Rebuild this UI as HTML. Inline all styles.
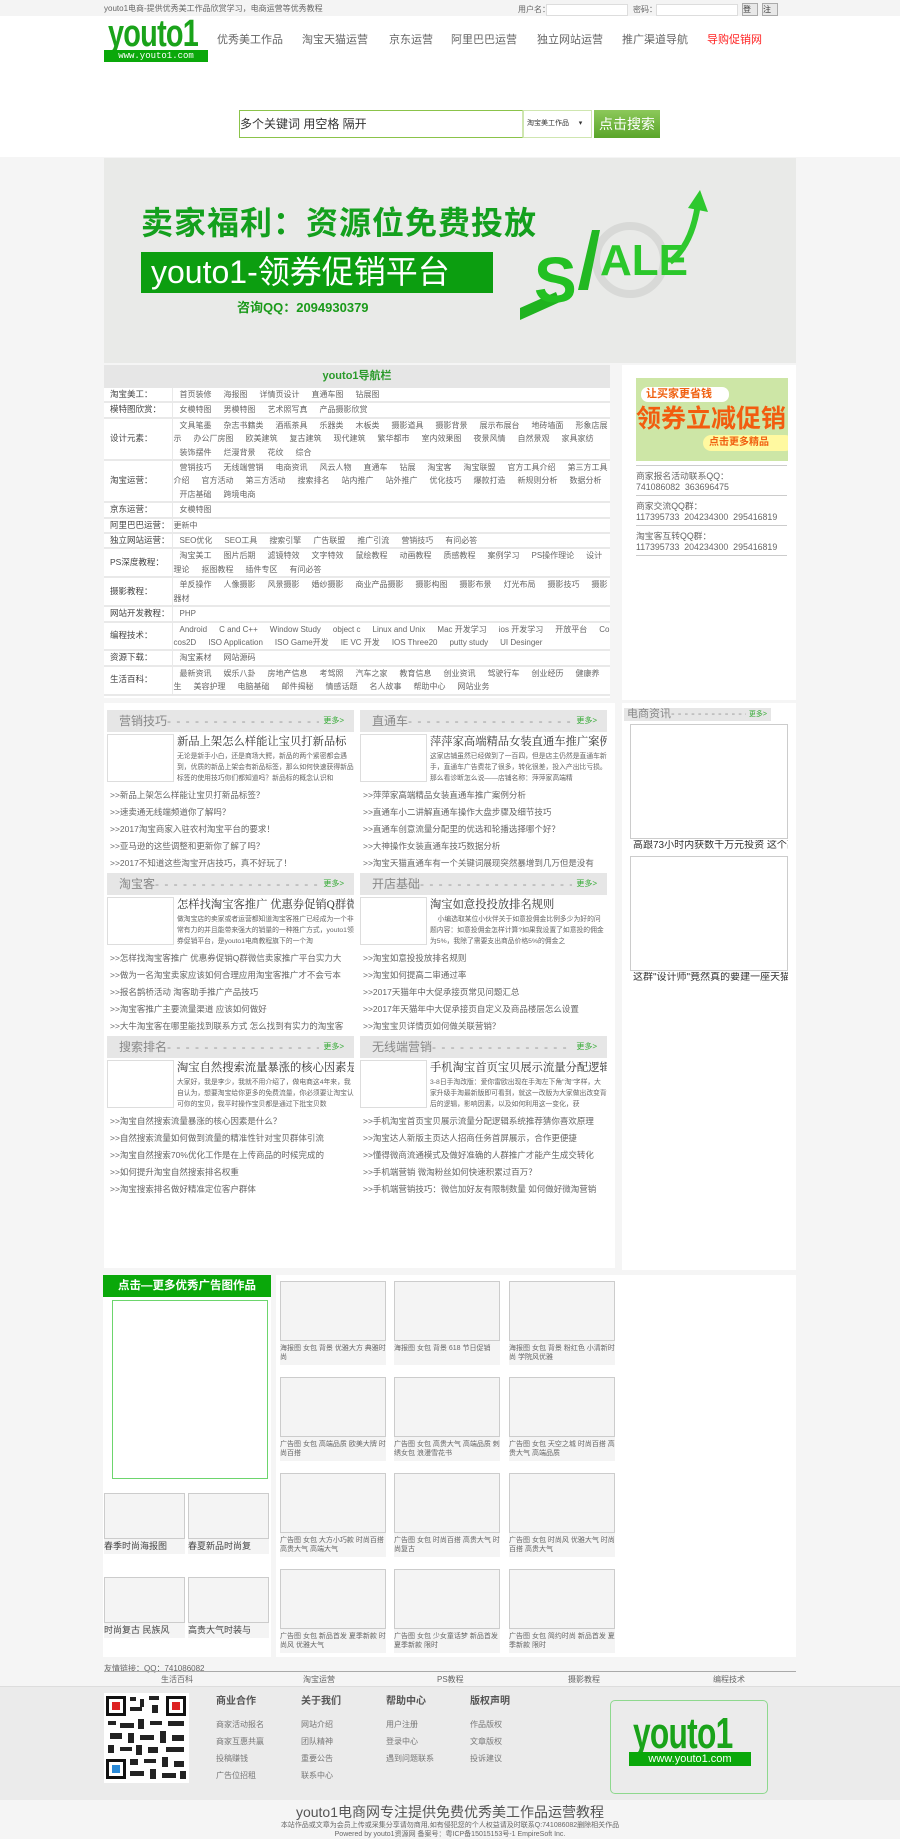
<!DOCTYPE html>
<html><head><meta charset="utf-8">
<style>
*{margin:0;padding:0;box-sizing:border-box}
body{width:900px;height:1839px;background:#f5f5f5;font-family:"Liberation Sans","Noto Sans CJK SC",sans-serif;font-size:11px;color:#555;position:relative;overflow:hidden}
.abs{position:absolute}
.top{left:0;top:0;width:900px;height:16px;background:#f4f4f4}
.hdr{left:0;top:16px;width:900px;height:141px;background:#fff}
.nav span{position:absolute;top:31px;font-size:11px;color:#666;white-space:nowrap}
.inp{border:1px solid #ddd;height:12px;background:#fff}
.banner{left:104px;top:158px;width:692px;height:205px;background:#e9eae8}
table.nv{border-collapse:collapse;width:506px;font-size:8px;color:#666;table-layout:fixed}
table.nv td{border-bottom:2px solid #e9e9e9;line-height:13.4px;vertical-align:middle;padding:0}
table.nv td.l{width:68px;border-right:1px solid #e9e9e9;padding-left:6px;color:#444;white-space:nowrap;font-size:8.5px}
table.nv td.r{padding-left:1px;word-break:break-all}
table.nv td.r i{font-style:normal;margin:0 6px}
.sec{position:absolute;width:247px;height:160px}
.sh{height:22px;background:#e6e6e6;font-size:12px;color:#888;line-height:22px;padding:0 10px 0 12px;white-space:nowrap;overflow:hidden;display:flex}
.sh b{font-weight:normal;color:#999;flex:1;overflow:hidden;letter-spacing:1px}
.sh em{font-style:normal;color:#3a3;font-size:8px;margin-left:4px;flex:none}
.im{position:absolute;left:0;top:24px;width:67px;height:48px;border:1px solid #ddd;background:#fff}
.tt{position:absolute;left:70px;top:24px;width:177px;font-family:"Liberation Serif","Noto Serif CJK SC",serif;font-size:11.3px;color:#333;white-space:nowrap;overflow:hidden;line-height:16px}
.sm{position:absolute;left:70px;top:41px;width:177px;height:32px;overflow:hidden;font-size:6.8px;line-height:11px;color:#666}
.ls{position:absolute;left:3px;top:77px;font-size:8.5px;line-height:17px;color:#666;white-space:nowrap;width:244px;overflow:hidden}
.cell{position:absolute;width:106px;height:84px;background:#f4f4f4}
.cell div{height:60px;border:1px solid #ccc;background:#f4f4f4}
.cell p{font-size:7px;line-height:9px;color:#666;padding-top:3px}
.fc{position:absolute;top:1693px;font-size:8px;color:#777;line-height:17px}
.fc b{display:block;font-size:10px;color:#555;margin-bottom:6px}
.logo{font-weight:bold;color:#1aa31a;letter-spacing:-1px;transform-origin:left top;white-space:nowrap}
</style></head><body>
<div class="abs top"></div>
<div class="abs" style="left:104px;top:3px;font-size:8px;color:#666">youto1电商-提供优秀美工作品欣赏学习，电商运营等优秀教程</div>
<div class="abs" style="left:518px;top:4px;font-size:8px;color:#666">用户名：</div>
<div class="abs inp" style="left:546px;top:4px;width:82px"></div>
<div class="abs" style="left:633px;top:4px;font-size:8px;color:#666">密码：</div>
<div class="abs inp" style="left:656px;top:4px;width:82px"></div>
<div class="abs" style="left:742px;top:3px;width:16px;height:13px;border:1px solid #aaa;background:#e8e8e8;font-size:8px;color:#333">登陆</div>
<div class="abs" style="left:762px;top:3px;width:16px;height:13px;border:1px solid #aaa;background:#e8e8e8;font-size:8px;color:#333">注册</div>
<div class="abs hdr"></div>
<div class="abs logo" style="left:108px;top:16px;font-size:38px;line-height:36px;transform:scaleX(0.76)">youto1</div>
<div class="abs" style="left:104px;top:50px;width:104px;height:12px;background:#0aa80a;color:#fff;font-family:'Liberation Mono',monospace;font-size:9px;text-align:center;line-height:12px">www.youto1.com</div>
<div class="nav">
<span style="left:217px">优秀美工作品</span><span style="left:302px">淘宝天猫运营</span><span style="left:389px">京东运营</span><span style="left:451px">阿里巴巴运营</span><span style="left:537px">独立网站运营</span><span style="left:622px">推广渠道导航</span><span style="left:707px;color:#f22">导购促销网</span>
</div>
<div class="abs" style="left:239px;top:110px;width:284px;height:28px;border:1px solid #8bc34a;border-right:1px solid #cfe6b0;background:#fff;font-size:12px;color:#333;line-height:26px">多个关键词 用空格 隔开</div>
<div class="abs" style="left:523px;top:110px;width:69px;height:28px;border:1px solid #cfe6b0;background:#fff;font-size:7px;color:#333;line-height:26px;padding-left:3px">淘宝美工作品 &nbsp;&nbsp;&nbsp;&nbsp;▾</div>
<div class="abs" style="left:594px;top:110px;width:66px;height:28px;background:linear-gradient(#8cc85a,#5aa52a);color:#fff;font-size:14px;line-height:28px;text-align:center">点击搜索</div>

<div class="abs banner"></div>
<div class="abs" style="left:141px;top:205px;font-size:32px;font-weight:bold;color:#14a01e;letter-spacing:1px;white-space:nowrap;line-height:36px">卖家福利：资源位免费投放</div>
<div class="abs" style="left:141px;top:252px;width:352px;height:41px;background:#0c9e10;color:#fff;font-size:32px;line-height:41px;padding-left:10px;white-space:nowrap">youto1-领券促销平台</div>
<div class="abs" style="left:237px;top:297px;font-size:13px;font-weight:bold;color:#1a9a1a">咨询QQ：2094930379</div>
<svg class="abs" style="left:520px;top:190px" width="190" height="130" viewBox="0 0 190 130">
<circle cx="110" cy="70" r="34" fill="none" stroke="#d8d9d7" stroke-width="8"/>
<path d="M0 130 L40 112 L36 102 L0 118Z" fill="#1fb31f"/>
<text x="14" y="112" font-family="Liberation Sans" font-weight="bold" font-size="64" fill="#22c022">S</text>
<path d="M58 100 L72 40 L80 40 L68 100Z" fill="#22b822"/>
<text x="80" y="85" font-family="Liberation Sans" font-weight="bold" font-size="44" fill="#2bc72b">ALE</text>
<path d="M150 72 Q172 55 178 14" stroke="#2ec82e" stroke-width="6" fill="none"/>
<path d="M168 18 L180 0 L188 22Z" fill="#2ec82e"/>
</svg>

<!-- nav table -->
<div class="abs" style="left:104px;top:365px;width:506px;height:333px;background:#fff;overflow:hidden">
<div style="height:23px;background:#e6e6e6;text-align:center;font-size:11px;font-weight:bold;color:#2a9a2a;line-height:23px">youto1导航栏</div>
<table class="nv">
<tr><td class="l">淘宝美工：</td><td class="r"><i>首页装修</i><i>海报图</i><i>详情页设计</i><i>直通车图</i><i>钻展图</i></td></tr>
<tr><td class="l">模特图欣赏：</td><td class="r"><i>女模特图</i><i>男模特图</i><i>艺术照写真</i><i>产品摄影欣赏</i></td></tr>
<tr><td class="l">设计元素：</td><td class="r"><i>文具笔墨</i><i>杂志书籍类</i><i>酒瓶茶具</i><i>乐器类</i><i>木板类</i><i>摄影道具</i><i>摄影背景</i><i>展示布展台</i><i>地砖墙面</i><i>形象店展示</i><i>办公厂房图</i><i>欧美建筑</i><i>复古建筑</i><i>现代建筑</i><i>繁华都市</i><i>室内效果图</i><i>夜景风情</i><i>自然景观</i><i>家具家纺</i><i>装饰摆件</i><i>烂漫背景</i><i>花纹</i><i>综合</i></td></tr>
<tr><td class="l">淘宝运营：</td><td class="r"><i>营销技巧</i><i>无线端营销</i><i>电商资讯</i><i>风云人物</i><i>直通车</i><i>钻展</i><i>淘宝客</i><i>淘宝联盟</i><i>官方工具介绍</i><i>第三方工具介绍</i><i>官方活动</i><i>第三方活动</i><i>搜索排名</i><i>站内推广</i><i>站外推广</i><i>优化技巧</i><i>爆款打造</i><i>新规则分析</i><i>数据分析</i><i>开店基础</i><i>跨境电商</i></td></tr>
<tr><td class="l">京东运营：</td><td class="r"><i>女模特图</i></td></tr>
<tr><td class="l">阿里巴巴运营：</td><td class="r">更新中</td></tr>
<tr><td class="l">独立网站运营：</td><td class="r"><i>SEO优化</i><i>SEO工具</i><i>搜索引擎</i><i>广告联盟</i><i>推广引流</i><i>营销技巧</i><i>有问必答</i></td></tr>
<tr><td class="l">PS深度教程：</td><td class="r"><i>淘宝美工</i><i>图片后期</i><i>滤镜特效</i><i>文字特效</i><i>鼠绘教程</i><i>动画教程</i><i>质感教程</i><i>案例学习</i><i>PS操作理论</i><i>设计理论</i><i>抠图教程</i><i>插件专区</i><i>有问必答</i></td></tr>
<tr><td class="l">摄影教程：</td><td class="r"><i>单反操作</i><i>人像摄影</i><i>风景摄影</i><i>婚纱摄影</i><i>商业产品摄影</i><i>摄影构图</i><i>摄影布景</i><i>灯光布局</i><i>摄影技巧</i><i>摄影器材</i></td></tr>
<tr><td class="l">网站开发教程：</td><td class="r"><i>PHP</i></td></tr>
<tr><td class="l">编程技术：</td><td class="r"><i>Android</i><i>C and C++</i><i>Window Study</i><i>object c</i><i>Linux and Unix</i><i>Mac 开发学习</i><i>ios 开发学习</i><i>开放平台</i><i>Cocos2D</i><i>ISO Application</i><i>ISO Game开发</i><i>IE VC 开发</i><i>IOS Three20</i><i>putty study</i><i>UI Desinger</i></td></tr>
<tr><td class="l">资源下载：</td><td class="r"><i>淘宝素材</i><i>网站源码</i></td></tr>
<tr><td class="l">生活百科：</td><td class="r"><i>最新资讯</i><i>娱乐八卦</i><i>房地产信息</i><i>考驾照</i><i>汽车之家</i><i>教育信息</i><i>创业资讯</i><i>驾驶行车</i><i>创业经历</i><i>健康养生</i><i>美容护理</i><i>电脑基础</i><i>邮件揭秘</i><i>情感话题</i><i>名人故事</i><i>帮助中心</i><i>网站业务</i></td></tr>
</table></div>

<!-- right sidebar -->
<div class="abs" style="left:622px;top:365px;width:174px;height:335px;background:#fff"></div>
<div class="abs" style="left:636px;top:378px;width:152px;height:83px;background:#cde6a6;overflow:hidden">
<div class="abs" style="left:5px;top:9px;width:88px;height:15px;background:#fff;border-radius:7px;color:#f06010;font-size:11px;font-weight:bold;line-height:15px;padding-left:5px">让买家更省钱</div>
<div class="abs" style="left:0;top:27px;white-space:nowrap;color:#f25c0f;font-size:25px;font-weight:bold;line-height:28px">领券立减促销</div>
<div class="abs" style="left:67px;top:57px;width:90px;height:16px;background:#fff9a0;border-radius:8px;color:#f06010;font-size:10px;font-weight:bold;line-height:16px;padding-left:6px">点击更多精品</div>
</div>
<div class="abs" style="left:636px;top:465px;width:151px;font-size:8.8px;color:#666;line-height:11px;white-space:nowrap">
<div style="border-top:1px solid #ccc;padding:5px 0 2px">商家报名活动联系QQ：<br>741086082 &nbsp;363696475</div>
<div style="border-top:1px solid #ccc;padding:5px 0 2px">商家交流QQ群：<br>117395733 &nbsp;204234300 &nbsp;295416819</div>
<div style="border-top:1px solid #ccc;padding:5px 0 2px;border-bottom:1px solid #ccc">淘宝客互转QQ群：<br>117395733 &nbsp;204234300 &nbsp;295416819</div>
</div>

<!-- articles -->
<div class="abs" style="left:104px;top:703px;width:511px;height:565px;background:#fff"></div>
<div class="sec" style="left:107px;top:710px">
<div class="sh">营销技巧<b>- - - - - - - - - - - - - - - - - - - - - - - - - - - - - - - - -</b><em>更多&gt;</em></div>
<div class="im"></div><div class="tt">新品上架怎么样能让宝贝打新品标</div>
<div class="sm">无论是新手小白，还是商场大鳄，新品的两个紧密都会遇到，优质的新品上架会有新品标签，那么如何快速获得新品标签的使用技巧你们都知道吗？新品标的概念认识和</div>
<div class="ls">&gt;&gt;新品上架怎么样能让宝贝打新品标签？<br>&gt;&gt;速卖通无线端频道你了解吗？<br>&gt;&gt;2017淘宝商家入驻农村淘宝平台的要求！<br>&gt;&gt;亚马逊的这些调整和更新你了解了吗？<br>&gt;&gt;2017不知道这些淘宝开店技巧，真不好玩了！</div></div>
<div class="sec" style="left:360px;top:710px">
<div class="sh">直通车<b>- - - - - - - - - - - - - - - - - - - - - - - - - - - - - - - - -</b><em>更多&gt;</em></div>
<div class="im"></div><div class="tt">萍萍家高端精品女装直通车推广案例</div>
<div class="sm">这家店铺虽然已经做到了一百四，但是店主仍然是直通车新手，直通车广告费花了很多，转化很差，投入产出比亏损。那么看诊断怎么说——店铺名称：萍萍家高端精</div>
<div class="ls">&gt;&gt;萍萍家高端精品女装直通车推广案例分析<br>&gt;&gt;直通车小二讲解直通车操作大盘步骤及细节技巧<br>&gt;&gt;直通车创意流量分配里的优选和轮播选择哪个好？<br>&gt;&gt;大神操作女装直通车技巧数据分析<br>&gt;&gt;淘宝天猫直通车有一个关键词展现突然暴增到几万但是没有</div></div>
<div class="sec" style="left:107px;top:873px">
<div class="sh">淘宝客<b>- - - - - - - - - - - - - - - - - - - - - - - - - - - - - - - - -</b><em>更多&gt;</em></div>
<div class="im"></div><div class="tt">怎样找淘宝客推广 优惠券促销Q群微</div>
<div class="sm">做淘宝店的卖家或者运营都知道淘宝客推广已经成为一个非常有力的并且能带来强大的销量的一种推广方式，youto1领券促销平台，是youto1电商教程旗下的一个淘</div>
<div class="ls">&gt;&gt;怎样找淘宝客推广 优惠券促销Q群微信卖家推广平台实力大<br>&gt;&gt;做为一名淘宝卖家应该如何合理应用淘宝客推广才不会亏本<br>&gt;&gt;报名鹊桥活动 淘客助手推广产品技巧<br>&gt;&gt;淘宝客推广主要流量渠道 应该如何做好<br>&gt;&gt;大牛淘宝客在哪里能找到联系方式 怎么找到有实力的淘宝客</div></div>
<div class="sec" style="left:360px;top:873px">
<div class="sh">开店基础<b>- - - - - - - - - - - - - - - - - - - - - - - - - - - - - - - - -</b><em>更多&gt;</em></div>
<div class="im"></div><div class="tt">淘宝如意投投放排名规则</div>
<div class="sm">&nbsp;&nbsp;&nbsp;&nbsp;小编选取某位小伙伴关于如意投佣金比例多少为好的问题内容：如意投佣金怎样计算?如果我设置了如意投的佣金为5%，我除了需要支出商品价格5%的佣金之</div>
<div class="ls">&gt;&gt;淘宝如意投投放排名规则<br>&gt;&gt;淘宝如何提高二审通过率<br>&gt;&gt;2017天猫年中大促承接页常见问题汇总<br>&gt;&gt;2017年天猫年中大促承接页自定义及商品楼层怎么设置<br>&gt;&gt;淘宝宝贝详情页如何做关联营销？</div></div>
<div class="sec" style="left:107px;top:1036px">
<div class="sh">搜索排名<b>- - - - - - - - - - - - - - - - - - - - - - - - - - - - - - - - -</b><em>更多&gt;</em></div>
<div class="im"></div><div class="tt">淘宝自然搜索流量暴涨的核心因素是</div>
<div class="sm">大家好，我是李少，我就不用介绍了，做电商这4年来，我自认为，想要淘宝给你更多的免费流量，你必须要让淘宝认可你的宝贝，我平时操作宝贝都是通过下批宝贝数</div>
<div class="ls">&gt;&gt;淘宝自然搜索流量暴涨的核心因素是什么？<br>&gt;&gt;自然搜索流量如何做到流量的精准性针对宝贝群体引流<br>&gt;&gt;淘宝自然搜索70%优化工作是在上传商品的时候完成的<br>&gt;&gt;如何提升淘宝自然搜索排名权重<br>&gt;&gt;淘宝搜索排名做好精准定位客户群体</div></div>
<div class="sec" style="left:360px;top:1036px">
<div class="sh">无线端营销<b>- - - - - - - - - - - - - - - - - - - - - - - - - - - - - - - - -</b><em>更多&gt;</em></div>
<div class="im"></div><div class="tt">手机淘宝首页宝贝展示流量分配逻辑</div>
<div class="sm">3-8日手淘改版：爱你雷欧出现在手淘左下角"淘"字样，大家升级手淘最新版即可看到，就这一改版为大家做出改变背后的逻辑，影响因素，以及如何利用这一变化，获</div>
<div class="ls">&gt;&gt;手机淘宝首页宝贝展示流量分配逻辑系统推荐猜你喜欢原理<br>&gt;&gt;淘宝达人新版主页达人招商任务首屏展示，合作更便捷<br>&gt;&gt;懂得微商流通模式及做好准确的人群推广才能产生成交转化<br>&gt;&gt;手机端营销 微淘粉丝如何快速积累过百万？<br>&gt;&gt;手机端营销技巧：微信加好友有限制数量 如何做好微淘营销</div></div>

<!-- right col -->
<div class="abs" style="left:622px;top:703px;width:174px;height:567px;background:#fff"></div>
<div class="abs" style="left:624px;top:708px;width:147px;height:13px;background:#e6e6e6;font-size:11px;color:#888;line-height:13px;padding:0 4px 0 3px;white-space:nowrap;overflow:hidden;display:flex"><span>电商资讯</span><span style="color:#999;flex:1;overflow:hidden">- - - - - - - - - - - - - - - - -</span><span style="color:#3a3;font-size:7px;margin-left:3px">更多&gt;</span></div>
<div class="abs" style="left:630px;top:724px;width:158px;height:115px;border:1px solid #ccc"></div>
<div class="abs" style="left:633px;top:840px;width:155px;height:11px;overflow:hidden;font-size:10px;color:#333;line-height:12px;white-space:nowrap">高跟73小时内获数千万元投资 这个高</div>
<div class="abs" style="left:630px;top:856px;width:158px;height:115px;border:1px solid #ccc"></div>
<div class="abs" style="left:633px;top:972px;width:155px;height:11px;overflow:hidden;font-size:10px;color:#333;line-height:12px;white-space:nowrap">这群"设计师"竟然真的要建一座天猫小</div>

<!-- bottom -->
<div class="abs" style="left:103px;top:1275px;width:168px;height:382px;background:#fff"></div>
<div class="abs" style="left:103px;top:1275px;width:168px;height:22px;background:#0aa80a;color:#fff;font-size:11.5px;font-weight:bold;text-align:center;line-height:22px">点击—更多优秀广告图作品</div>
<div class="abs" style="left:112px;top:1300px;width:156px;height:179px;border:1px solid #6dd56d"></div>
<div class="cell" style="left:104px;top:1493px;width:81px;height:61px"><div style="height:46px"></div><p style="font-size:9px;color:#444">春季时尚海报图</p></div>
<div class="cell" style="left:188px;top:1493px;width:81px;height:61px"><div style="height:46px"></div><p style="font-size:9px;color:#444">春夏新品时尚复</p></div>
<div class="cell" style="left:104px;top:1577px;width:81px;height:61px"><div style="height:46px"></div><p style="font-size:9px;color:#444">时尚复古 民族风</p></div>
<div class="cell" style="left:188px;top:1577px;width:81px;height:61px"><div style="height:46px"></div><p style="font-size:9px;color:#444">高贵大气时装与</p></div>

<div class="abs" style="left:276px;top:1275px;width:520px;height:382px;background:#fff"></div>
<div class="cell" style="left:280px;top:1281px"><div></div><p>海报图 女包 背景 优雅大方 典雅时尚</p></div>
<div class="cell" style="left:394px;top:1281px"><div></div><p>海报图 女包 背景 618 节日促销</p></div>
<div class="cell" style="left:509px;top:1281px"><div></div><p>海报图 女包 背景 粉红色 小清新时尚 学院风优雅</p></div>
<div class="cell" style="left:280px;top:1377px"><div></div><p>广告图 女包 高端品质 欧美大牌 时尚百搭</p></div>
<div class="cell" style="left:394px;top:1377px"><div></div><p>广告图 女包 高贵大气 高端品质 刺绣女包 浪漫雪花书</p></div>
<div class="cell" style="left:509px;top:1377px"><div></div><p>广告图 女包 天空之城 时尚百搭 高贵大气 高端品质</p></div>
<div class="cell" style="left:280px;top:1473px"><div></div><p>广告图 女包 大方小巧款 时尚百搭 高贵大气 高端大气</p></div>
<div class="cell" style="left:394px;top:1473px"><div></div><p>广告图 女包 时尚百搭 高贵大气 时尚复古</p></div>
<div class="cell" style="left:509px;top:1473px"><div></div><p>广告图 女包 时尚风 优雅大气 时尚百搭 高贵大气</p></div>
<div class="cell" style="left:280px;top:1569px"><div></div><p>广告图 女包 新品首发 夏季新款 时尚风 优雅大气</p></div>
<div class="cell" style="left:394px;top:1569px"><div></div><p>广告图 女包 少女童话梦 新品首发 夏季新款 限时</p></div>
<div class="cell" style="left:509px;top:1569px"><div></div><p>广告图 女包 简约时尚 新品首发 夏季新款 限时</p></div>

<!-- footer -->
<div class="abs" style="left:104px;top:1663px;font-size:8px;color:#666">友情链接：QQ：741086082</div>
<div class="abs" style="left:104px;top:1671px;width:692px;border-top:1px solid #aaa"></div>
<div class="abs" style="left:0;top:1672px;width:900px;height:14px;font-size:8px;color:#666">
<span class="abs" style="left:161px;top:2px">生活百科</span><span class="abs" style="left:303px;top:2px">淘宝运营</span><span class="abs" style="left:437px;top:2px">PS教程</span><span class="abs" style="left:568px;top:2px">摄影教程</span><span class="abs" style="left:713px;top:2px">编程技术</span></div>
<div class="abs" style="left:0;top:1686px;width:900px;height:1px;background:#ddd"></div>
<div class="abs" style="left:0;top:1687px;width:900px;height:113px;background:#ebebeb"></div>
<svg class="abs" style="left:104px;top:1693px" width="85" height="90" viewBox="0 0 85 90">
<rect width="85" height="90" fill="#fff"/>
<g fill="#111">
<rect x="2" y="3" width="20" height="20"/><rect x="62" y="3" width="20" height="20"/><rect x="2" y="66" width="20" height="20"/>
</g>
<g fill="#fff"><rect x="5" y="6" width="14" height="14"/><rect x="65" y="6" width="14" height="14"/><rect x="5" y="69" width="14" height="14"/></g>
<rect x="8" y="9" width="8" height="8" fill="#d22"/><rect x="68" y="9" width="8" height="8" fill="#d22"/><rect x="8" y="72" width="8" height="8" fill="#2a8ad8"/>
<g fill="#222">
<rect x="26" y="4" width="6" height="4"/><rect x="36" y="6" width="4" height="8"/><rect x="45" y="3" width="10" height="4"/><rect x="26" y="14" width="12" height="4"/><rect x="48" y="12" width="6" height="8"/>
<rect x="4" y="28" width="8" height="4"/><rect x="16" y="30" width="14" height="5"/><rect x="34" y="26" width="6" height="10"/><rect x="46" y="28" width="12" height="4"/><rect x="64" y="28" width="16" height="5"/>
<rect x="6" y="40" width="12" height="6"/><rect x="24" y="40" width="6" height="10"/><rect x="36" y="42" width="14" height="5"/><rect x="56" y="38" width="6" height="12"/><rect x="68" y="42" width="12" height="6"/>
<rect x="4" y="52" width="6" height="8"/><rect x="16" y="54" width="12" height="4"/><rect x="32" y="52" width="6" height="10"/><rect x="44" y="54" width="10" height="6"/><rect x="62" y="54" width="18" height="5"/>
<rect x="26" y="66" width="8" height="6"/><rect x="40" y="66" width="12" height="4"/><rect x="58" y="64" width="6" height="10"/><rect x="70" y="68" width="10" height="6"/>
<rect x="26" y="78" width="14" height="5"/><rect x="46" y="76" width="6" height="10"/><rect x="58" y="80" width="14" height="5"/><rect x="76" y="78" width="6" height="8"/>
</g></svg>
<div class="fc" style="left:216px"><b>商业合作</b>商家活动报名<br>商家互惠共赢<br>投稿赚钱<br>广告位招租</div>
<div class="fc" style="left:301px"><b>关于我们</b>网站介绍<br>团队精神<br>重要公告<br>联系中心</div>
<div class="fc" style="left:386px"><b>帮助中心</b>用户注册<br>登录中心<br>遇到问题联系</div>
<div class="fc" style="left:470px"><b>版权声明</b>作品版权<br>文章版权<br>投诉建议</div>
<div class="abs" style="left:610px;top:1700px;width:158px;height:94px;border:1px solid #8ed88e;border-radius:5px;background:#ebebeb"></div>
<div class="abs logo" style="left:633px;top:1714px;font-size:44px;line-height:40px;transform:scaleX(0.72)">youto1</div>
<div class="abs" style="left:629px;top:1752px;width:122px;height:14px;background:#0aa80a;color:#fff;font-size:11px;text-align:center;line-height:14px">www.youto1.com</div>
<div class="abs" style="left:0;top:1802px;width:900px;text-align:center;font-size:14px;color:#555">youto1电商网专注提供免费优秀美工作品运营教程</div>
<div class="abs" style="left:0;top:1820px;width:900px;text-align:center;font-size:7px;color:#666">本站作品或文章为会员上传或采集分享请勿商用,如有侵犯您的个人权益请及时联系Q:741086082删除相关作品</div>
<div class="abs" style="left:0;top:1829px;width:900px;text-align:center;font-size:7px;color:#666">Powered by youto1资源网 备案号：粤ICP备15015153号-1 EmpireSoft Inc.</div>
</body></html>
